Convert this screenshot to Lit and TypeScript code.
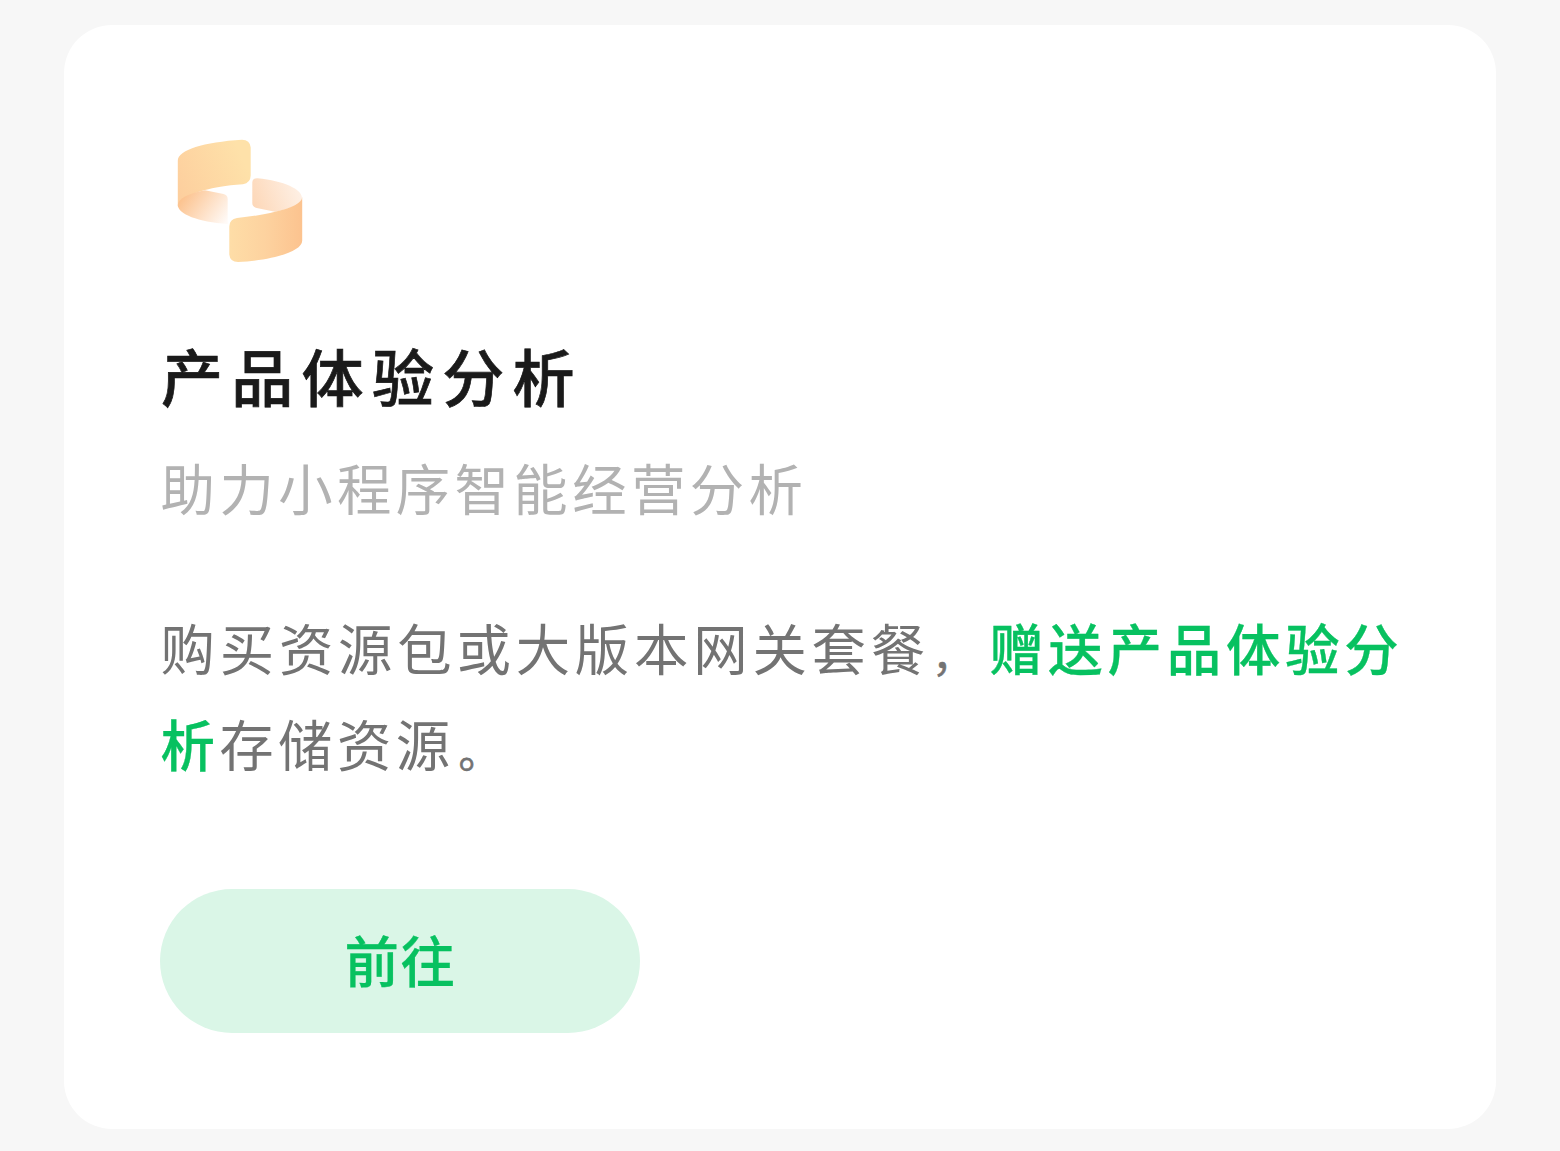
import { LitElement, html, css } from "lit";
import { customElement, property } from "lit/decorators.js";

@customElement("ribbon-icon")
export class RibbonIcon extends LitElement {
  static styles = css`
    :host {
      display: block;
      width: 160px;
      height: 160px;
    }

    svg {
      display: block;
      width: 100%;
      height: 100%;
    }
  `;

  render() {
    return html`
      <svg viewBox="0 0 160 160" fill="none" aria-hidden="true">
        <defs>
          <linearGradient id="top" x1="18" y1="70" x2="84" y2="40" gradientUnits="userSpaceOnUse">
            <stop stop-color="#fdcf9e" />
            <stop offset="1" stop-color="#fee1a9" />
          </linearGradient>
          <linearGradient id="bottom" x1="70" y1="120" x2="142" y2="120" gradientUnits="userSpaceOnUse">
            <stop stop-color="#fedda7" />
            <stop offset="0.5" stop-color="#fdd29f" />
            <stop offset="1" stop-color="#fcc38f" />
          </linearGradient>
          <linearGradient id="left" x1="24" y1="76" x2="64" y2="104" gradientUnits="userSpaceOnUse">
            <stop stop-color="#fcc491" />
            <stop offset="1" stop-color="#fffaf7" />
          </linearGradient>
          <linearGradient id="right" x1="94" y1="84" x2="138" y2="68" gradientUnits="userSpaceOnUse">
            <stop stop-color="#fdd8b9" />
            <stop offset="1" stop-color="#feefe3" />
          </linearGradient>
        </defs>
        <path fill="url(#top)" d="M17.8 39.7C17.8 29 44 21 82 18.7Q90 18.7 90.7 26.5V54.5Q90.5 62 83 63.2C65 64.5 54 66.5 45 69C28 73.5 17.8 80 17.8 86Z" />
        <path fill="url(#left)" d="M17.8 84C17.8 78 28 72.5 45 69.3L63.5 73Q67.7 74 67.7 78V103C38 101 17.8 93 17.8 84Z" />
        <path fill="url(#right)" d="M97.5 57.2C124 60 142 68 142 77C142 83 132 87.5 115 90.7L96.7 87Q92 86 92.3 81.5V61.5Q92.5 57 97.5 57.2Z" />
        <path fill="url(#bottom)" d="M142.2 76V119.7C142 130 115 139 78 141Q70 141 69.3 133.5V105.5Q69.5 98 77 97C91 95.5 104 93.7 115 90.7C132 87 142 82 142.2 76Z" />
      </svg>
    `;
  }
}

@customElement("app-root")
export class AppRoot extends LitElement {
  @property({ type: String })
  title = "产品体验分析";

  @property({ type: String })
  subtitle = "助力小程序智能经营分析";

  static styles = css`
    :host {
      display: block;
      box-sizing: border-box;
      height: 1151px;
      padding: 25px 64px 22px;
      background: #f7f7f7;
      font-family: "Noto Sans CJK SC", sans-serif;
    }

    .card {
      box-sizing: border-box;
      height: 1104px;
      padding: 96px;
      border-radius: 48px;
      background: #fff;
    }

    .title {
      margin: 46px 0 0;
      padding-left: 1px;
      font-size: 62px;
      font-weight: 500;
      line-height: 96px;
      letter-spacing: 8.3px;
      color: #1a1a1a;
      -webkit-text-stroke: 0.7px currentColor;
    }

    .subtitle {
      margin: 24px 0 0;
      padding-left: 0.6px;
      font-size: 54.4px;
      line-height: 80px;
      letter-spacing: 4.4px;
      color: #b2b2b2;
    }

    .description {
      margin: 72px 0 0;
      padding-left: 0.5px;
      font-size: 54.4px;
      line-height: 96px;
      letter-spacing: 4.8px;
      color: #737373;
      white-space: nowrap;
    }

    .line {
      display: block;
      height: 96px;
    }

    .line:last-child {
      letter-spacing: 4.4px;
    }

    .mark {
      display: inline-block;
      box-sizing: border-box;
      width: 59.2px;
      padding-left: 2px;
      font-size: 42px;
      line-height: 1;
      letter-spacing: 0;
      vertical-align: -2px;
      -webkit-text-stroke: 0.6px currentColor;
    }

    .line:last-child .mark {
      padding-left: 4px;
    }

    .highlight {
      font-weight: 500;
      color: #07c160;
      -webkit-text-stroke: 0.3px currentColor;
    }

    .action {
      display: block;
      width: 480px;
      height: 144px;
      margin-top: 98px;
      padding: 0 0 6px 1px;
      border: none;
      border-radius: 72px;
      background: #daf6e7;
      font-family: inherit;
      font-size: 54.4px;
      font-weight: 500;
      letter-spacing: 1.6px;
      color: #07c160;
      -webkit-text-stroke: 0.3px currentColor;
      cursor: pointer;
    }
  `;

  render() {
    return html`
      <section class="card">
        <ribbon-icon></ribbon-icon>
        <h1 class="title">${this.title}</h1>
        <p class="subtitle">${this.subtitle}</p>
        <p class="description">
          <span class="line"
            >购买资源包或大版本网关套餐<span class="mark">，</span
            ><span class="highlight">赠送产品体验分</span></span
          >
          <span class="line"
            ><span class="highlight">析</span>存储资源<span class="mark">。</span></span
          >
        </p>
        <button class="action">前往</button>
      </section>
    `;
  }
}
